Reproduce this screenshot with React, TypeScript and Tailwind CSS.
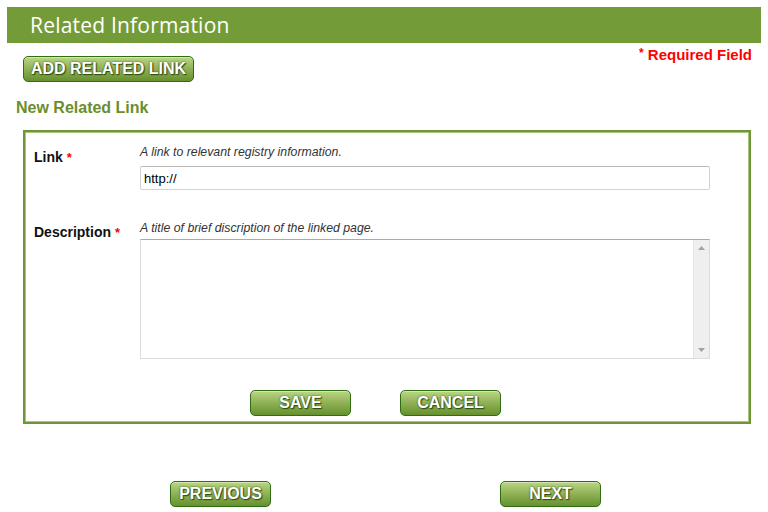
import React from "react";

const btn =
  "h-[26px] rounded-[5px] border border-[#2f6e12] bg-gradient-to-b from-[#bad684] via-[#8fb155] to-[#66902e] text-white font-bold text-[16px] leading-none [text-shadow:0_0_2px_#2d4a10,1px_1px_1px_#2d4a10] shadow-[inset_0_1px_0_rgba(255,255,255,0.4)] flex items-center justify-center";

function GreenButton({ label, className }: { label: string; className: string }) {
  return (
    <button type="button" className={`${btn} ${className}`}>
      {label}
    </button>
  );
}

export default function App() {
  return (
    <div className="w-[768px] h-[512px] bg-white overflow-hidden font-['Liberation_Sans',Arial,sans-serif] text-[#111]">
      {/* ── Header bar ── */}
      <div className="ml-[7px] mt-[7px] w-[754px] h-[36px] bg-[#739c39] flex items-center pl-[23px]">
        <span className="text-white text-[21px] font-['Open_Sans',sans-serif] leading-none tracking-[0.2px]">
          Related Information
        </span>
      </div>

      {/* ── Add link + required ── */}
      <div className="flex items-start h-[48px]">
        <GreenButton label="ADD RELATED LINK" className="ml-[23px] mt-[13px] w-[171px] text-[16.5px]" />
        <div className="ml-auto mr-[16px] mt-[4px] text-[15px] font-bold text-[#ff0000] leading-none">
          <span className="text-[12px] align-top">*</span> Required Field
        </div>
      </div>

      <div className="ml-[16px] mt-[9px] text-[16px] font-bold text-[#6a8f2a] leading-none">
        New Related Link
      </div>

      {/* ── Form box ── */}
      <div className="ml-[23px] mt-[14px] w-[728px] h-[294px] border-2 border-[#6d9637] shadow-[inset_0_0_0_1px_#a9c47c]">
        <div className="grid grid-cols-[106px_570px] pl-[9px] pt-[14px]">
          <div className="pt-[4px] text-[14px] font-bold leading-none">
            Link <span className="text-[#ff0000] text-[13px]">*</span>
          </div>
          <div>
            <div className="text-[12.3px] italic text-[#333] leading-none">A link to relevant registry information.</div>
            <input
              readOnly
              value="http://"
              className="mt-[8px] w-[570px] h-[24px] border border-[#d3d3d3] border-t-[#b8b8b8] rounded-[2px] px-[3px] text-[13px] text-black outline-none font-['Liberation_Sans',Arial,sans-serif]"
            />
          </div>

          <div className="pt-[35px] text-[14px] font-bold leading-none">
            Description <span className="text-[#ff0000] text-[13px]">*</span>
          </div>
          <div className="pt-[32px]">
            <div className="text-[12.3px] italic text-[#333] leading-none">A title of brief discription of the linked page.</div>
            <div className="mt-[4px] w-[570px] h-[120px] border border-[#dcdcdc] border-t-[#aaaaaa] flex">
              <textarea className="flex-1 resize-none outline-none" />
              <div className="w-[16px] bg-[#efefef] border-l border-[#e4e4e4] flex flex-col items-center justify-between py-[6px]">
                <svg width="7" height="4" viewBox="0 0 7 4"><path d="M0 4 L3.5 0 L7 4 Z" fill="#a3a3a3" /></svg>
                <svg width="7" height="4" viewBox="0 0 7 4"><path d="M0 0 L3.5 4 L7 0 Z" fill="#a3a3a3" /></svg>
              </div>
            </div>
          </div>
        </div>

        <div className="flex mt-[31px]">
          <GreenButton label="SAVE" className="ml-[225px] w-[101px] h-[25px]" />
          <GreenButton label="CANCEL" className="ml-[49px] w-[101px] h-[25px]" />
        </div>
      </div>

      {/* ── Wizard nav ── */}
      <div className="flex mt-[57px]">
        <GreenButton label="PREVIOUS" className="ml-[170px] w-[101px]" />
        <GreenButton label="NEXT" className="ml-[229px] w-[101px]" />
      </div>
    </div>
  );
}
